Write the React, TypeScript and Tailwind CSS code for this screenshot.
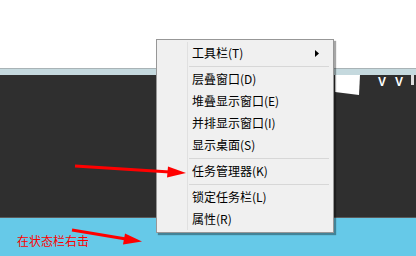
import React from "react";

type Item = { label: string; sub?: boolean } | "sep";

const items: Item[] = [
  { label: "工具栏(T)", sub: true },
  "sep",
  { label: "层叠窗口(D)" },
  { label: "堆叠显示窗口(E)" },
  { label: "并排显示窗口(I)" },
  { label: "显示桌面(S)" },
  "sep",
  { label: "任务管理器(K)" },
  "sep",
  { label: "锁定任务栏(L)" },
  { label: "属性(R)" },
];

function ContextMenu() {
  return (
    <div className="absolute left-[156px] top-[39px] w-[178px] border border-[#979797] bg-[#f0f0f0] py-[2px] pl-[2px] pr-[2px] shadow-[2px_2px_1px_rgba(0,0,0,0.35)]">
      <div className="relative">
        <div className="absolute left-[28px] top-0 bottom-0 w-px bg-[#e0e0e0]" />
        {items.map((it, i) =>
          it === "sep" ? (
            <div key={i} className="flex h-[4px] items-center pl-[30px] pr-[2px]">
              <div className="h-px w-full bg-[#d7d7d7]" />
            </div>
          ) : (
            <div key={i} className="flex h-[22px] items-center justify-between pl-[33px] pr-[12px] text-[12px] text-black">
              <span>{it.label}</span>
              {it.sub && (
                <svg width="4" height="7" viewBox="0 0 4 7">
                  <path d="M0 0 L4 3.5 L0 7 Z" fill="#000" />
                </svg>
              )}
            </div>
          )
        )}
      </div>
    </div>
  );
}

export default function App() {
  return (
    <div
      className="relative h-[256px] w-[416px] overflow-hidden bg-white"
      style={{ fontFamily: '"Noto Sans CJK SC", "Noto Sans", sans-serif' }}
    >
      <div className="h-[68px] bg-white" />
      <div className="h-[7px] border-t border-[#a9b3b6] bg-[#c5d9de]" />
      <div className="relative h-[143px] border-b border-[#5a5a5a] bg-[#2f2f2f]">
        <svg className="absolute left-[333px] top-0" width="83" height="22" viewBox="0 0 83 22">
          <path d="M2 0 L27 0 L26 20 L2 17 Z" fill="#fff" />
          <path d="M78 0 L81 0 L81 10 L78 10 Z" fill="#ddd" />
        </svg>
        <div className="absolute left-[378px] top-0 flex gap-[9px] text-[12px] font-bold leading-[14px] text-white" style={{ fontFamily: '"Liberation Sans", sans-serif' }}>
          <span>V</span>
          <span>V</span>
        </div>
      </div>
      <div className="h-[38px] bg-[#66c9e8] pl-[17px] pt-[9px]">
        <span className="text-[12px] leading-[16px] text-[#ff0000]">在状态栏右击</span>
      </div>
      <ContextMenu />
      <svg className="pointer-events-none absolute left-0 top-0" width="416" height="256" viewBox="0 0 416 256">
        <line x1="75" y1="166" x2="170" y2="172" stroke="#ff0000" strokeWidth="3" />
        <path d="M168 166.5 L186 173 L167 177.5 Z" fill="#ff0000" />
        <line x1="72" y1="230" x2="126" y2="239" stroke="#ff0000" strokeWidth="3" />
        <path d="M125 233.5 L142 241.5 L123 244.5 Z" fill="#ff0000" />
      </svg>
    </div>
  );
}
